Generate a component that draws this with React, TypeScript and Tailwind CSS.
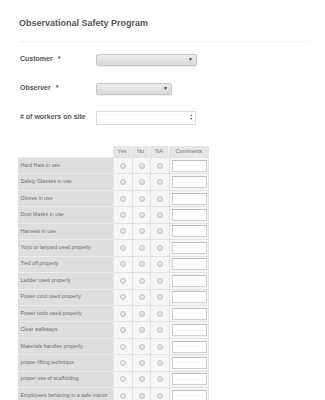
import React from "react";

const items = [
  "Hard Hats in use",
  "Safety Glasses in use",
  "Gloves in use",
  "Dust Masks in use",
  "Harness in use",
  "Yoyo or lanyard used properly",
  "Tied off properly",
  "Ladder used properly",
  "Power cord used properly",
  "Power tools used properly",
  "Clear walkways",
  "Materials handles properly",
  "proper lifting technique",
  "proper use of scaffolding",
  "Employees behaving in a safe manor",
];

function Radio() {
  return (
    <span className="block w-[6px] h-[6px] rounded-full border border-[#c4c4c4] bg-[radial-gradient(circle_at_40%_35%,#f0f0f0,#d4d4d4)]" />
  );
}

function SelectBox({ width }: { width: string }) {
  return (
    <div
      className={`${width} h-[12px] rounded-[2px] border border-[#c8c8c8] bg-gradient-to-b from-[#ececec] to-[#d9d9d9] flex items-center pl-[3px] pr-[3px] shadow-[0_1px_1px_rgba(0,0,0,0.08)]`}
    >
      <div className="flex-1 h-[6px] border-t border-dotted border-[#f4f4f4]" />
      <span className="ml-[2px] text-[5px] leading-none text-[#444]">▼</span>
    </div>
  );
}

export default function App() {
  return (
    <div
      className="bg-white w-[325px] h-[400px] overflow-hidden pl-[19px] pr-[17px] pt-[17px] text-[#555]"
      style={{ fontFamily: '"Liberation Sans", Arial, sans-serif' }}
    >
      <div className="text-[9px] leading-[12px] font-bold text-[#555]">Observational Safety Program</div>
      <div className="mt-[12px] border-b border-dotted border-[#e4e4e4]" />

      <div className="mt-[3px]">
        <div className="flex items-center h-[29px]">
          <div className="w-[77px] pl-[1px] text-[7px] font-bold text-[#555]">
            Customer <span className="ml-[3px]">*</span>
          </div>
          <SelectBox width="w-[101px]" />
        </div>
        <div className="flex items-center h-[29px]">
          <div className="w-[77px] pl-[1px] text-[7px] font-bold text-[#555]">
            Observer <span className="ml-[3px]">*</span>
          </div>
          <SelectBox width="w-[76px]" />
        </div>
        <div className="flex items-center h-[29px]">
          <div className="w-[77px] pl-[1px] text-[7px] font-bold text-[#555]">
            # of workers on site
          </div>
          <div className="w-[100px] h-[14px] border border-[#dcdcdc] bg-white flex items-center pl-[3px] pr-[2px]">
            <div className="flex-1 h-[7px] border-t border-dotted border-[#f0f0f0]" />
            <div className="flex flex-col items-center leading-none text-[3.5px] text-[#555] ml-[2px]">
              <span>▲</span>
              <span>▼</span>
            </div>
          </div>
        </div>
      </div>

      <div className="mt-[14px] -ml-[1px] text-[5.5px] text-[#777]">
        <div className="flex h-[11px]">
          <div className="w-[95px]" />
          <div className="w-[19px] bg-[#e6e6e6] border-r border-[#f2f2f2] flex items-center justify-center">Yes</div>
          <div className="w-[18px] bg-[#e6e6e6] border-r border-[#f2f2f2] flex items-center justify-center">No</div>
          <div className="w-[19px] bg-[#e6e6e6] border-r border-[#f2f2f2] flex items-center justify-center">NA</div>
          <div className="w-[39.5px] bg-[#e6e6e6] flex items-center justify-center">Comments</div>
        </div>
        {items.map((label) => (
          <div key={label} className="flex h-[16.45px]">
            <div className="w-[95px] shrink-0 bg-[#dedede] border-t border-[#ececec] flex items-center pl-[2.5px] text-[5.3px] text-[#6e6e6e] whitespace-nowrap">
              <span className="relative z-10">{label}</span>
            </div>
            <div className="w-[19px] shrink-0 bg-[#f6f6f6] border-t border-l border-[#e2e2e2] flex items-center justify-center">
              <Radio />
            </div>
            <div className="w-[18px] shrink-0 bg-[#f6f6f6] border-t border-l border-[#e2e2e2] flex items-center justify-center">
              <Radio />
            </div>
            <div className="w-[19px] shrink-0 bg-[#f6f6f6] border-t border-l border-[#e2e2e2] flex items-center justify-center">
              <Radio />
            </div>
            <div className="w-[39.5px] shrink-0 bg-[#f6f6f6] border-t border-l border-r border-[#e2e2e2] flex items-center pl-[1.5px]">
              <div className="w-[35px] h-[12px] bg-white border border-[#cfcfcf] border-t-[#bdbdbd] flex items-center px-[3px]">
                <div className="flex-1 border-t border-dotted border-[#ececec]" />
              </div>
            </div>
          </div>
        ))}
      </div>
    </div>
  );
}
